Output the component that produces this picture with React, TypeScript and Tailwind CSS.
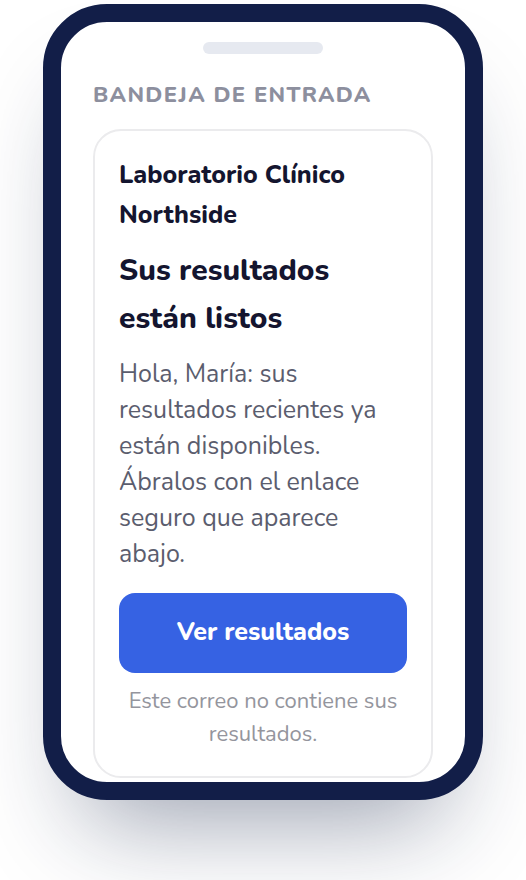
export default function App() {
  return (
    <main className="flex min-h-screen items-start justify-center overflow-hidden bg-white px-4 pt-1 pb-20 font-['Nunito','Lato',sans-serif]">
      <div className="w-full max-w-[440px] rounded-[64px] border-[18px] border-[#121e48] bg-white px-8 pt-5 pb-1 shadow-[0_60px_100px_-40px_rgba(16,32,66,0.42)]">
        <div className="mx-auto h-3 w-[120px] rounded-full bg-[#e6e9f0]" />
        <h1 className="mt-[25px] text-[22px] leading-8 font-extrabold tracking-[0.06em] text-[#8d8f9e] uppercase">
          Bandeja de entrada
        </h1>
        <article className="mt-[18px] rounded-[28px] border-2 border-[#ebebed] px-6 pt-6 pb-[25px]">
          <p className="text-[25px] leading-10 font-extrabold text-[#14152f]">
            Laboratorio Clínico Northside
          </p>
          <h2 className="mt-3 text-[30px] leading-12 font-extrabold text-[#14152f]">
            Sus resultados están listos
          </h2>
          <p className="mt-[13px] text-[25px] leading-9 text-[#5b5d6e]">
            Hola, María: sus resultados recientes ya están disponibles. Ábralos
            con el enlace seguro que aparece abajo.
          </p>
          <button
            type="button"
            className="mt-[21px] h-20 w-full rounded-2xl bg-[#3662e3] text-[25px] font-extrabold text-white"
          >
            Ver resultados
          </button>
          <p className="mt-3 text-center text-[22px] leading-[33px] text-[#94959d]">
            Este correo no contiene sus resultados.
          </p>
        </article>
      </div>
    </main>
  );
}
